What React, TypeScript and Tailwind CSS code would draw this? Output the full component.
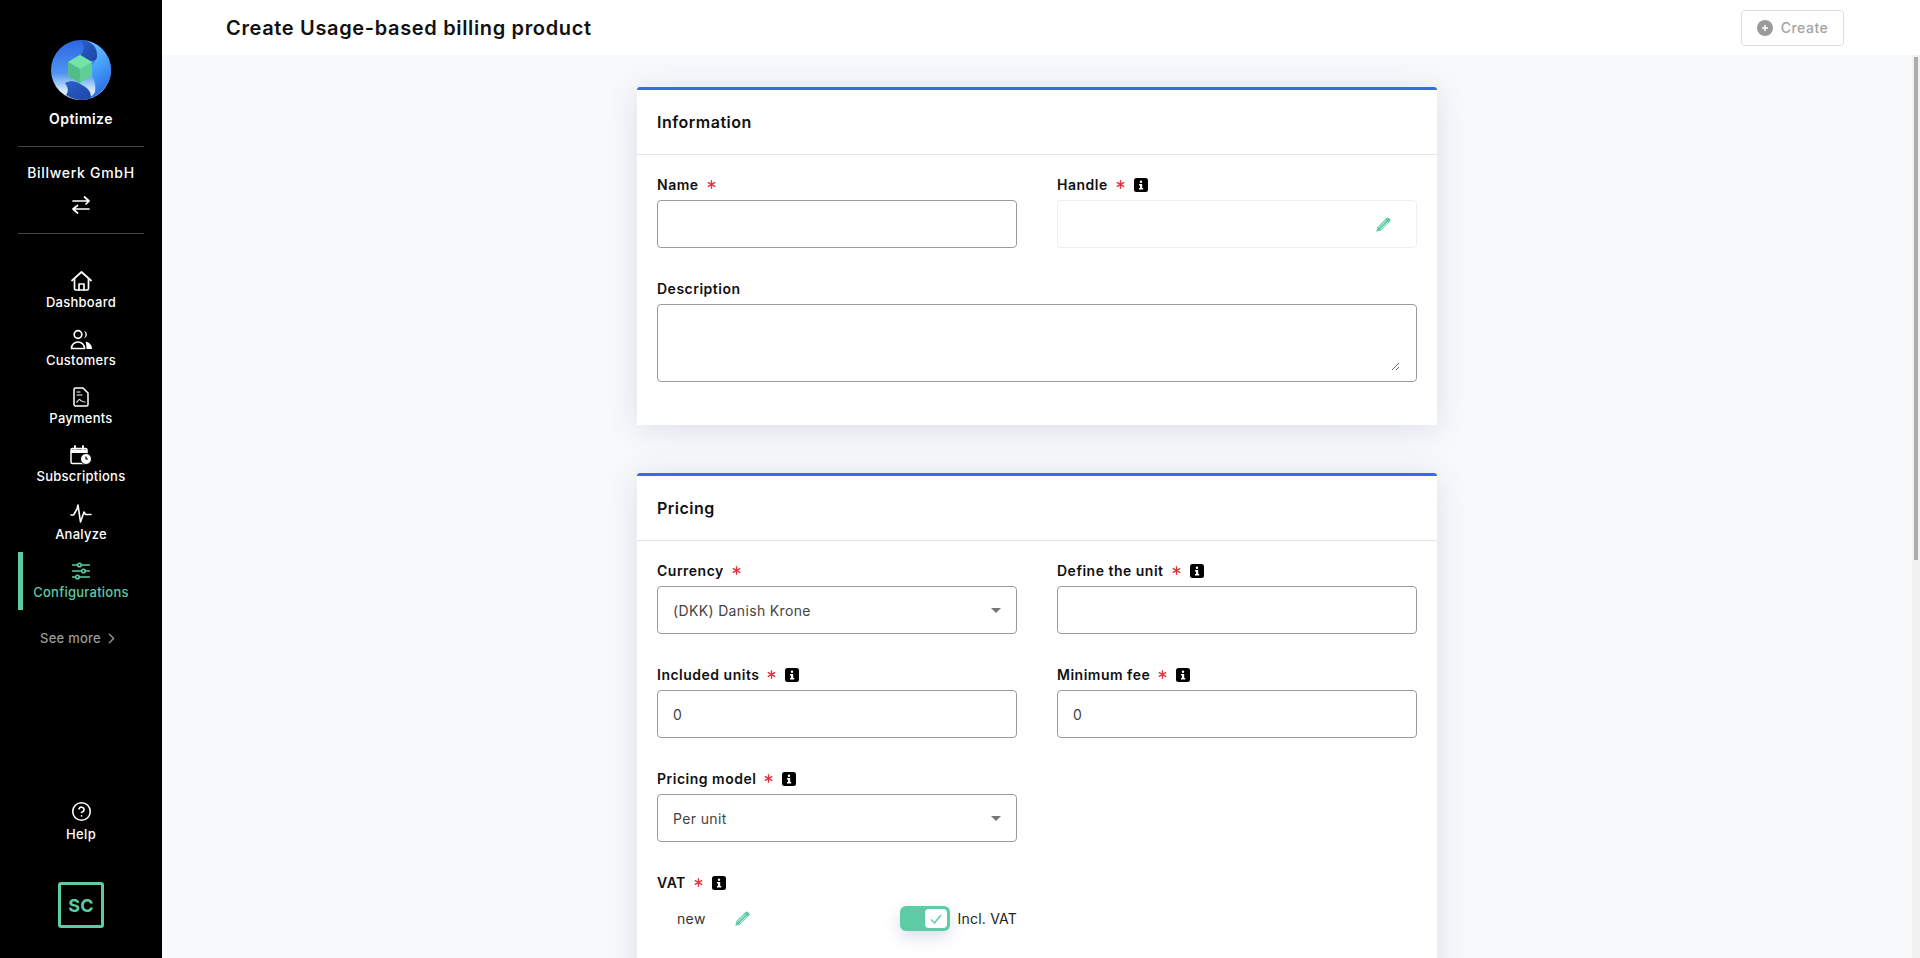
import React from 'react';
import { Asterisk, ChevronRight, CircleHelp } from 'lucide-react';

const font = "font-['Inter','Liberation_Sans',sans-serif]";

function LogoMark() {
  return (
    <svg width="60" height="60" viewBox="0 0 60 60">
      <defs>
        <linearGradient id="lg1" x1="0.2" y1="0" x2="0.2" y2="1">
          <stop offset="0" stopColor="#2c66e4" />
          <stop offset="0.55" stopColor="#4f93f2" />
          <stop offset="0.85" stopColor="#d5ecff" />
        </linearGradient>
        <linearGradient id="lg2" x1="0.3" y1="0" x2="0.7" y2="1">
          <stop offset="0" stopColor="#7cc6ff" />
          <stop offset="0.45" stopColor="#45a2fb" />
          <stop offset="1" stopColor="#2a62dd" />
        </linearGradient>
        <linearGradient id="lg3" x1="0" y1="0" x2="1" y2="1">
          <stop offset="0" stopColor="#2a5fc8" />
          <stop offset="1" stopColor="#1d46a6" />
        </linearGradient>
      </defs>
      <circle cx="30" cy="30" r="30" fill="url(#lg1)" />
      <path d="M30 0C38 0 46 5 46 14 46 22 40 24 40 30 40 38 46 40 44 52 42 56 36 60 30 60 46 60 60 46 60 30 60 14 46 0 30 0Z" fill="url(#lg2)" />
      <path d="M28 0C40 0 47 8 46 17 45 23 36 22 29 16 34 10 34 4 28 0Z" fill="url(#lg3)" />
      <path d="M14 43C20 40 26 41 31 45 36 48 40 50 40 58 34 61 24 61 15 55 18 51 17 47 14 43Z" fill="url(#lg3)" />
      <path d="M29 15 41 22 41 36 29 43 17 36 17 22Z" fill="#5fcf97" />
      <path d="M29 15 41 22 29 29 17 22Z" fill="#74e3a9" />
      <path d="M29 29 29 43 17 36 17 22Z" fill="#52bd88" />
    </svg>
  );
}

function SwapIcon() {
  return (
    <svg width="20" height="20" viewBox="0 0 20 20" fill="none" stroke="white" strokeWidth="1.7" strokeLinecap="round" strokeLinejoin="round">
      <path d="M2 6h16M13.500 2 18 6l-3 3" />
      <path d="M18 14H2M6.500 10.500 2 14l4.500 4" />
    </svg>
  );
}

function HomeIcon() {
  return (
    <svg width="21" height="20" viewBox="0 0 21 20" fill="none" stroke="white" strokeWidth="1.7" strokeLinecap="round" strokeLinejoin="round">
      <path d="M1 9.500 10.500 1 20 9.500" />
      <path d="M3.500 7.500V17.500a1.500 1.500 0 0 0 1.500 1.500h11a1.500 1.500 0 0 0 1.500-1.500V7.500" />
      <path d="M8 19v-6h5v6" />
    </svg>
  );
}

function CustomersIcon() {
  return (
    <svg width="23" height="21" viewBox="0 0 23 21" fill="none" stroke="white" strokeWidth="1.7">
      <circle cx="8" cy="5.500" r="3.800" />
      <path d="M1.500 19.500c0-4 3-6.500 6.500-6.500s6.500 2.500 6.500 6.500z" strokeLinejoin="round" />
      <path d="M14 2a3.700 3.700 0 0 1 0 7.200 5 5 0 0 0 0-7.200z" fill="white" stroke="none" />
      <path d="M15.500 12.800c3.700.3 6.500 3 6.500 7.200h-5.500c0-2.800-.2-5.200-1-7.200z" fill="white" stroke="none" />
    </svg>
  );
}

function PaymentsIcon() {
  return (
    <svg width="16" height="20" viewBox="0 0 16 20" fill="none" stroke="white" strokeWidth="1.500" strokeLinejoin="round" strokeLinecap="round">
      <path d="M2.500 1h7.500l5 5v11.500a1.500 1.500 0 0 1-1.500 1.500h-11A1.500 1.500 0 0 1 1 17.500v-15A1.500 1.500 0 0 1 2.500 1z" />
      <path d="M4 5h3M4 8h5" strokeWidth="1.100" />
      <path d="M3.500 15c1.500 0 1.500-2.500 3-2.500 1 0 1 1.500 2 1.500s1.500 1 3.500 1" strokeWidth="1.100" />
    </svg>
  );
}

function SubscriptionsIcon() {
  return (
    <svg width="22" height="20" viewBox="0 0 22 20" fill="none">
      <path d="M2.500 3.500h13a1.500 1.500 0 0 1 1.500 1.500v12a1.500 1.500 0 0 1-1.500 1.500h-13A1.500 1.500 0 0 1 1 17V5a1.500 1.500 0 0 1 1.500-1.500z" stroke="white" strokeWidth="1.500" />
      <path d="M1 4.500h16V8H1z" fill="white" />
      <path d="M5 1v3M13 1v3" stroke="white" strokeWidth="1.800" strokeLinecap="round" />
      <circle cx="16" cy="14" r="5.500" fill="white" stroke="black" strokeWidth="1" />
      <path d="M16 11.500V14h2" stroke="black" strokeWidth="1.200" />
    </svg>
  );
}

function AnalyzeIcon() {
  return (
    <svg width="22" height="19" viewBox="0 0 22 19" fill="none" stroke="white" strokeWidth="1.600" strokeLinecap="round" strokeLinejoin="round">
      <path d="M1 11h2.500L7 5l1-4 2.500 17 3.500-10 1.500 2.500H21" />
    </svg>
  );
}

function ConfigIcon() {
  return (
    <svg width="18" height="18" viewBox="0 0 18 18" fill="none" stroke="#5ccba6" strokeWidth="1.500">
      <path d="M.5 3h5M9 3h8.500M.5 9h9M13 9h4.500M.5 15h3M7 15h10.500" strokeLinecap="round" />
      <circle cx="7.500" cy="3" r="1.800" />
      <circle cx="11.500" cy="9" r="1.800" />
      <circle cx="5.500" cy="15" r="1.800" />
    </svg>
  );
}

function InfoIcon() {
  return (
    <svg width="14" height="14" viewBox="0 0 14 14" className="shrink-0">
      <rect width="14" height="14" rx="2.500" fill="black" />
      <circle cx="7" cy="3.700" r="1.200" fill="white" />
      <path d="M5 6h3.200v4h1v1.400H5V10h1V7.400H5z" fill="white" />
    </svg>
  );
}

function PencilIcon() {
  return (
    <svg width="15" height="15" viewBox="0 0 15 15" className="shrink-0">
      <path d="M10.500 1a1.700 1.700 0 0 1 2.400 0l1.100 1.100a1.700 1.700 0 0 1 0 2.400L5 13.500 .3 14.700l1.200-4.700z" fill="#5ccba6" />
      <path d="M3 10.500 10 3.500M4.800 12.200l7-7" stroke="white" strokeWidth="0.800" />
    </svg>
  );
}

function Caret() {
  return <span className="h-0 w-0 border-x-[5px] border-t-[5px] border-x-transparent border-t-[#777]" />;
}

function NavItem({ icon, label, active }: { icon: React.ReactNode; label: string; active?: boolean }) {
  return (
    <div className={`flex h-[58px] flex-col items-center pt-[8px] ${active ? 'border-l-[5px] border-[#5ccba6] pr-[5px] text-[#5ccba6]' : 'text-white'}`}>
      <div className="flex h-[22px] items-center justify-center">{icon}</div>
      <span className="text-[13px] font-medium leading-5 tracking-[0.25px]">{label}</span>
    </div>
  );
}

function Label({ text, required, info }: { text: string; required?: boolean; info?: boolean }) {
  return (
    <div className="mb-[6px] flex h-[19px] items-center">
      <span className="text-[14px] font-semibold tracking-[0.5px] text-[#111]">{text}</span>
      {required && <Asterisk size={15} strokeWidth={2.2} className="ml-[5px] text-[#e0323f]" />}
      {info && <span className="ml-[6px]"><InfoIcon /></span>}
    </div>
  );
}

function TextInput({ value }: { value?: string }) {
  return (
    <input
      readOnly
      value={value ?? ''}
      className="h-[48px] w-full rounded border border-[#9b9b9b] bg-white px-[15px] text-[14px] tracking-[0.35px] text-[#444] outline-none"
    />
  );
}

function SelectBox({ value }: { value: string }) {
  return (
    <div className="flex h-[48px] items-center justify-between rounded border border-[#9b9b9b] bg-white pl-[15px] pr-[15px] text-[14px] tracking-[0.35px] text-[#444]">
      <span>{value}</span>
      <Caret />
    </div>
  );
}

function Card({ title, children }: { title: string; children: React.ReactNode }) {
  return (
    <section className="w-[800px] rounded-t-[3px] border-t-[3px] border-[#3869f0] bg-white shadow-[0_4px_32px_rgba(60,90,160,0.16)]">
      <div className="flex h-[65px] items-center border-b border-[#e3e3e3] px-5 text-[16px] font-semibold tracking-[0.5px] text-[#111]">
        {title}
      </div>
      <div className="px-5 pt-5">{children}</div>
    </section>
  );
}

export default function App() {
  return (
    <div className={`flex h-screen overflow-hidden bg-[#f8f9fb] ${font}`}>
      <aside className="flex w-[162px] shrink-0 flex-col items-stretch bg-black pt-10">
        <div className="flex flex-col items-center px-[18px]">
          <LogoMark />
          <span className="mt-[9px] text-[14px] font-semibold leading-5 tracking-[0.45px] text-white">Optimize</span>
          <div className="mt-[17px] h-px w-full bg-[#444]" />
          <span className="mt-4 text-[14px] font-medium leading-5 tracking-[0.7px] text-white">Billwerk GmbH</span>
          <div className="mt-3"><SwapIcon /></div>
          <div className="mt-[18px] h-px w-full bg-[#444]" />
        </div>
        <nav className="mx-[18px] mt-[28px] flex flex-col">
          <NavItem icon={<HomeIcon />} label="Dashboard" />
          <NavItem icon={<CustomersIcon />} label="Customers" />
          <NavItem icon={<PaymentsIcon />} label="Payments" />
          <NavItem icon={<SubscriptionsIcon />} label="Subscriptions" />
          <NavItem icon={<AnalyzeIcon />} label="Analyze" />
          <NavItem icon={<ConfigIcon />} label="Configurations" active />
        </nav>
        <div className="mt-[19px] flex items-center justify-center pr-[2px] text-[13px] font-medium tracking-[0.25px] text-[#9a9a9a]">
          See more
          <ChevronRight size={17} strokeWidth={1.8} className="ml-[2px]" />
        </div>
        <div className="mt-auto flex flex-col items-center pb-[30px]">
          <CircleHelp size={21} strokeWidth={1.8} className="text-white" />
          <span className="mt-[2px] text-[13px] font-medium leading-5 tracking-[0.4px] text-white">Help</span>
          <div className="mt-[38px] flex h-[46px] w-[46px] items-center justify-center rounded-[3px] border-[3px] border-[#5ccba6] text-[18px] font-bold tracking-[0.3px] text-[#5ccba6]">
            SC
          </div>
        </div>
      </aside>

      <div className="flex min-w-0 flex-1 flex-col">
        <header className="flex h-[55px] shrink-0 items-center justify-between bg-white pl-[64px] pr-[76px]">
          <h1 className="text-[20px] font-semibold tracking-[0.65px] text-[#111]">Create Usage-based billing product</h1>
          <button className="flex h-[36px] w-[103px] items-center justify-center gap-2 rounded border border-[#ddd] bg-white text-[14px] font-medium tracking-[0.5px] text-[#a3a3a3]">
            <svg width="16" height="16" viewBox="0 0 16 16">
              <circle cx="8" cy="8" r="8" fill="#9a9a9a" />
              <path d="M8 5v6M5 8h6" stroke="white" strokeWidth="1.500" />
            </svg>
            Create
          </button>
        </header>

        <div className="flex min-h-0 flex-1">
          <main className="flex min-w-0 flex-1 justify-center overflow-hidden">
            <div className="flex flex-col items-center gap-[48px] pt-8">
              <Card title="Information">
                <div className="grid grid-cols-2 gap-x-10 gap-y-[31px] pb-[43px]">
                  <div>
                    <Label text="Name" required />
                    <TextInput />
                  </div>
                  <div>
                    <Label text="Handle" required info />
                    <div className="flex h-[48px] items-center justify-end rounded border border-[#eee] bg-white pr-[25px]">
                      <PencilIcon />
                    </div>
                  </div>
                  <div className="col-span-2">
                    <Label text="Description" />
                    <div className="h-[78px] rounded border border-[#9b9b9b] bg-white pb-[10px] pl-4 pr-4 pt-3">
                      <textarea readOnly className="block h-full w-full resize-y bg-transparent text-[14px] outline-none" />
                    </div>
                  </div>
                </div>
              </Card>

              <Card title="Pricing">
                <div className="grid grid-cols-2 gap-x-10 gap-y-[31px]">
                  <div>
                    <Label text="Currency" required />
                    <SelectBox value="(DKK) Danish Krone" />
                  </div>
                  <div>
                    <Label text="Define the unit" required info />
                    <TextInput />
                  </div>
                  <div>
                    <Label text="Included units" required info />
                    <TextInput value="0" />
                  </div>
                  <div>
                    <Label text="Minimum fee" required info />
                    <TextInput value="0" />
                  </div>
                  <div>
                    <Label text="Pricing model" required info />
                    <SelectBox value="Per unit" />
                  </div>
                  <div />
                  <div>
                    <Label text="VAT" required info />
                    <div className="mt-[14px] flex h-[25px] items-center pl-5">
                      <span className="text-[14px] tracking-[0.35px] text-[#333]">new</span>
                      <span className="ml-[29px]"><PencilIcon /></span>
                      <div className="ml-auto flex h-[25px] w-[50px] items-center justify-end rounded-[6px] bg-[#5ccba6] pr-[3px] shadow-[0_6px_16px_rgba(60,90,160,0.2)]">
                        <div className="flex h-[19px] w-[22px] items-center justify-center rounded-[4px] bg-white">
                          <svg width="12" height="10" viewBox="0 0 12 10" fill="none" stroke="#5ccba6" strokeWidth="1.400">
                            <path d="M1 5.500 4.500 9 11 1" />
                          </svg>
                        </div>
                      </div>
                      <span className="ml-2 text-[14px] tracking-[0.2px] text-[#222]">Incl. VAT</span>
                    </div>
                  </div>
                </div>
                <div className="h-[200px]" />
              </Card>
            </div>
          </main>
          {/* scrollbar */}
          <div className="w-2 shrink-0 bg-[#f1f1f1] pl-[2px] pr-[2px] pt-[2px]">
            <div className="h-[503px] w-full bg-[#ababab]" />
          </div>
        </div>
      </div>
    </div>
  );
}
